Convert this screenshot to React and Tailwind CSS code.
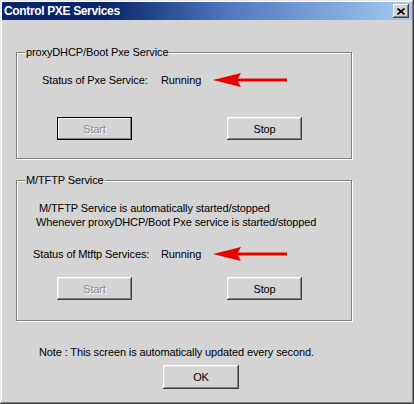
import React from "react";

const FONT = { fontFamily: '"Liberation Sans", Arial, sans-serif' };

function Arrow() {
  return (
    <svg width="76" height="16" viewBox="0 0 76 16" className="block">
      <rect x="24" y="6.5" width="50" height="3" fill="#e80000" />
      <polygon points="0,8 28,1 24,8 28,15" fill="#e80000" />
    </svg>
  );
}

function Btn({ label, disabled, isDefault, className = "" }) {
  const shadow = isDefault
    ? "shadow-[inset_0_0_0_1px_#000,inset_-2px_-2px_0_#808080,inset_2px_2px_0_#fff]"
    : "shadow-[inset_-1px_-1px_0_#404040,inset_1px_1px_0_#fff,inset_-2px_-2px_0_#808080,inset_2px_2px_0_#e4e4e4]";
  return (
    <div
      className={`flex h-[23px] w-[75px] items-center justify-center bg-[#d4d4d4] text-[11px] ${shadow} ${
        disabled ? "text-[#8a8a8a] [text-shadow:1px_1px_0_#fff]" : "text-black"
      } ${className}`}
    >
      {label}
    </div>
  );
}

function Group({ title, heightClass, className = "", children }) {
  return (
    <div
      className={`relative w-[336px] border border-[#808080] shadow-[inset_1px_1px_0_#fff,1px_1px_0_#fff] ${heightClass} ${className}`}
    >
      <div className="absolute -top-[8px] left-[8px] bg-[#d4d4d4] px-[1px] text-[11px] leading-[14px] text-black">
        {title}
      </div>
      {children}
    </div>
  );
}

export default function App() {
  return (
    <div
      style={FONT}
      className="h-[404px] w-[414px] overflow-hidden bg-[#d4d4d4] px-[2px] pt-[2px] text-[11px] leading-[14px] tracking-[-0.12px] text-black shadow-[inset_-1px_-1px_0_#404040,inset_1px_1px_0_#e8e8e8,inset_-2px_-2px_0_#808080,inset_2px_2px_0_#fff]"
    >
      {/* Title bar */}
      <div className="flex h-[18px] items-center justify-between bg-gradient-to-r from-[#0a246a] from-[25%] via-[#4f78bf] via-[55%] to-[#a6caf0] pl-[2px] pr-[3px]">
        <span className="text-[12px] font-bold tracking-[-0.35px] text-white">
          Control PXE Services
        </span>
        <div className="flex h-[14px] w-[16px] items-center justify-center bg-[#d4d4d4] shadow-[inset_-1px_-1px_0_#404040,inset_1px_1px_0_#fff,inset_-2px_-2px_0_#808080]">
          <svg width="8" height="7" viewBox="0 0 8 7">
            <path d="M0.5 0.5 L7.5 6.5 M7.5 0.5 L0.5 6.5" stroke="#000" strokeWidth="1.6" />
          </svg>
        </div>
      </div>

      {/* Group 1 */}
      <Group title="proxyDHCP/Boot Pxe Service" heightClass="h-[107px]" className="ml-[14px] mt-[32px]">
        <div className="flex items-center pt-[19px]">
          <span className="w-[144px] pl-[25px]">Status of Pxe Service:</span>
          <span className="w-[52px]">Running</span>
          <Arrow />
        </div>
        <div className="mt-[29px] flex pl-[40px]">
          <Btn label="Start" disabled isDefault />
          <Btn label="Stop" className="ml-[95px]" />
        </div>
      </Group>

      {/* Group 2 */}
      <Group title="M/TFTP Service" heightClass="h-[141px]" className="ml-[14px] mt-[21px]">
        <div className="pt-[20px]">
          <div className="pl-[22px]">M/TFTP Service is automatically started/stopped</div>
          <div className="pl-[19px]">Whenever proxyDHCP/Boot Pxe service is started/stopped</div>
        </div>
        <div className="mt-[17px] flex items-center">
          <span className="w-[144px] pl-[16px]">Status of Mtftp Services:</span>
          <span className="w-[52px]">Running</span>
          <Arrow />
        </div>
        <div className="mt-[15px] flex pl-[40px]">
          <Btn label="Start" disabled />
          <Btn label="Stop" className="ml-[95px]" />
        </div>
      </Group>

      <div className="mt-[24px] pl-[37px]">Note : This screen is automatically updated every second.</div>

      <div className="ml-[161px] mt-[6px]">
        <Btn label="OK" className="h-[24px] w-[76px]" />
      </div>
    </div>
  );
}
